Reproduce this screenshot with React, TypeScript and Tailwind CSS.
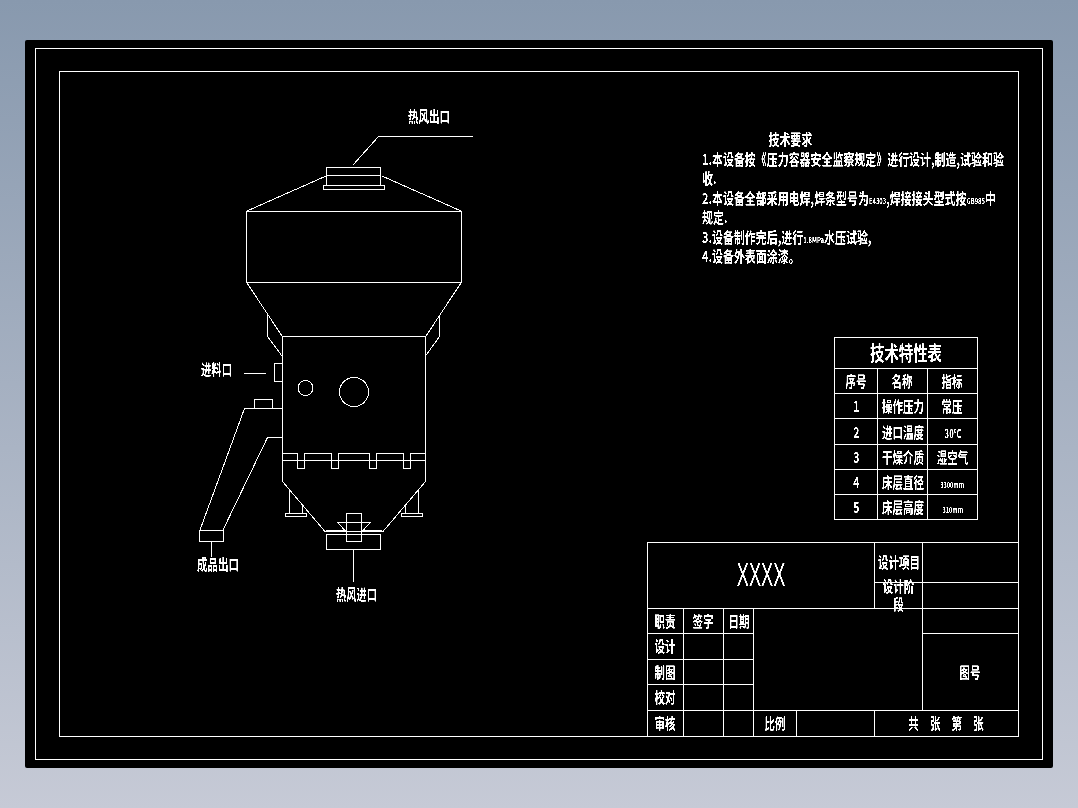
const cad = "inline-block whitespace-nowrap scale-x-[0.7] font-bold";
const line = "origin-left scale-x-[0.73] whitespace-nowrap";

function Cell({ className = "", children }: { className?: string; children?: React.ReactNode }) {
  return (
    <div className={`flex items-center justify-center border-white text-[15px] leading-none ${className}`}>
      <span className={cad}>{children}</span>
    </div>
  );
}

function Small({ children }: { children: React.ReactNode }) {
  return <span className="text-[8px] leading-none">{children}</span>;
}

function Label({ x, y, w, children }: { x: number; y: number; w: number; children: string }) {
  return (
    <text x={x} y={y} textLength={w} lengthAdjust="spacingAndGlyphs" fill="white" fontSize="15" fontWeight="700">
      {children}
    </text>
  );
}

function Dryer() {
  return (
    <svg
      viewBox="60 72 587 664"
      className="h-[664px] w-[587px] shrink-0"
      fill="none"
      stroke="white"
      strokeWidth="1"
      shapeRendering="crispEdges"
    >
      {/* top outlet */}
      <path d="M353 165L378.5 136.5H472.5" />
      <path d="M326.5 185.5V167.5H380.5V185.5M326.5 175.5H380.5" />
      <path d="M323.5 185.5H384.5V189.5H323.5Z" />
      <path d="M247 211L326 176M461 211L382 176" />
      {/* drum and hopper */}
      <path d="M246.5 211.5H461.5V282.5H246.5Z" />
      <path d="M247 283L282 336M461 283L426 336" />
      <path d="M267.5 314V336.5L282 356M439.5 316V336.5L425.5 356" />
      {/* body */}
      <path d="M282.5 336.5H425.5V481.5L383 531.5H325L282.5 481.5Z" />
      <path d="M274.5 363.5H282.5V381.5H274.5Z" />
      <path d="M244 373.5H266" />
      <circle cx="305.5" cy="388" r="7.5" />
      <circle cx="354" cy="392" r="14.5" />
      {/* discharge chute */}
      <path d="M254.5 408.5V399.5H272.5V408.5" />
      <path d="M282 408.5H244.5L200 530M282 437.5H267.5L223 530" />
      <path d="M199.5 530.5H223.5V541.5H199.5Z" />
      <path d="M211.5 542V557" />
      {/* band */}
      <path d="M283 453.5H297.5V468.5H304.5V453.5H331.5V468.5H338.5V453.5H369.5V468.5H376.5V453.5H403.5V468.5H410.5V453.5H425" />
      <path d="M283 460.5H425" />
      {/* legs */}
      <path d="M289.5 489V513M302.5 505V513M418.5 489V513M405.5 505V513" />
      <path d="M285.5 513.5H306.5V516.5H285.5ZM401.5 513.5H422.5V516.5H401.5Z" />
      {/* bottom inlet */}
      <path d="M326.5 534.5H380.5V549.5H326.5Z" />
      <path d="M346.5 541.5V513.5H361.5V541.5H346.5M346.5 534.5H361.5" />
      <path d="M346 531.5L337.5 522.5H370.5L362 531.5" />
      <path d="M326 530.5H346M362 530.5H382" />
      <path d="M353.5 550V582" />
      <g stroke="none">
        <Label x={408} y={122} w={42}>热风出口</Label>
        <Label x={201} y={375} w={31}>进料口</Label>
        <Label x={197} y={570} w={42}>成品出口</Label>
        <Label x={336} y={600} w={41}>热风进口</Label>
      </g>
    </svg>
  );
}

function Requirements() {
  return (
    <div className="pl-[55px] pt-[57px] text-[15px] font-bold leading-[19.5px] text-white">
      <div className={`${line} pl-[91px]`}>技术要求</div>
      <div className={line}>1.本设备按《压力容器安全监察规定》进行设计,制造,试验和验</div>
      <div className={line}>收.</div>
      <div className={line}>
        2.本设备全部采用电焊,焊条型号为<Small>E4303</Small>,焊接接头型式按<Small>GB985</Small>中
      </div>
      <div className={line}>规定.</div>
      <div className={line}>
        3.设备制作完后,进行<Small>1.8MPa</Small>水压试验,
      </div>
      <div className={line}>4.设备外表面涂漆。</div>
    </div>
  );
}

const specs = [
  ["1", "操作压力", "常压"],
  ["2", "进口温度", "30℃"],
  ["3", "干燥介质", "湿空气"],
  ["4", "床层直径", "3300mm"],
  ["5", "床层高度", "310mm"],
];

function SpecTable() {
  return (
    <div className="ml-[187px] mt-[71px] grid w-[144px] grid-cols-[43px_50px_50px] grid-rows-[31px_25px_25px_26px_25px_25px_25px] border-l border-t border-white">
      <div className="col-span-3 flex items-center justify-center border-b border-r border-white text-[20px] leading-none">
        <span className="inline-block scale-x-[0.72] whitespace-nowrap font-bold">技术特性表</span>
      </div>
      <Cell className="border-b border-r">序号</Cell>
      <Cell className="border-b border-r">名称</Cell>
      <Cell className="border-b border-r">指标</Cell>
      {specs.map(([no, name, value]) => (
        <div key={no} className="contents">
          <Cell className="border-b border-r">{no}</Cell>
          <Cell className="border-b border-r">{name}</Cell>
          <Cell className="border-b border-r">
            {value.endsWith("mm") ? <Small>{value}</Small> : value === "30℃" ? <span className="text-[11px]">{value}</span> : value}
          </Cell>
        </div>
      ))}
    </div>
  );
}

function TitleBlock() {
  return (
    <div className="mt-auto grid w-[371px] grid-cols-[36px_40px_30px_43px_78px_48px_95px] grid-rows-[40px_26px_25px_26px_25px_26px_25px] border-l border-t border-white [&>div]:pb-[2px]">
      <div className="col-span-5 row-span-2 flex items-center justify-center border-b border-r border-white font-['Liberation_Sans',sans-serif] text-[33px] leading-none">
        <span className="inline-block scale-x-[0.55]">XXXX</span>
      </div>
      <Cell className="border-b border-r">设计项目</Cell>
      <div className="border-b border-white" />
      <div className="relative border-b border-r border-white">
        <div className="absolute left-0 top-[-6px] w-full text-center text-[15px] font-bold leading-[18px]">
          <span className={cad}>设计阶</span>
          <br />
          <span className={cad}>段</span>
        </div>
      </div>
      <div className="border-b border-white" />

      <Cell className="border-b border-r">职责</Cell>
      <Cell className="border-b border-r">签字</Cell>
      <Cell className="border-b border-r">日期</Cell>
      <div className="col-span-3 row-span-4 border-b border-r border-white" />
      <div className="border-b border-white" />

      <Cell className="border-b border-r">设计</Cell>
      <div className="border-b border-r border-white" />
      <div className="border-b border-r border-white" />
      <Cell className="row-span-3 border-b">图号</Cell>

      <Cell className="border-b border-r">制图</Cell>
      <div className="border-b border-r border-white" />
      <div className="border-b border-r border-white" />

      <Cell className="border-b border-r">校对</Cell>
      <div className="border-b border-r border-white" />
      <div className="border-b border-r border-white" />

      <Cell className="border-r">审核</Cell>
      <div className="border-r border-white" />
      <div className="border-r border-white" />
      <Cell className="border-r">比例</Cell>
      <div className="border-r border-white" />
      <Cell className="col-span-2">
        <span className="inline-block pl-[16px] tracking-[16px]">共张第张</span>
      </Cell>
    </div>
  );
}

export default function App() {
  return (
    <div className="h-[808px] w-[1078px] overflow-hidden bg-linear-to-b from-[#8899ae] to-[#c6cad6] pl-[25px] pt-[40px]">
      <div className="h-[728px] w-[1028px] rounded-[2px] bg-black pl-[10px] pt-[8px] font-['Noto_Sans_CJK_SC',sans-serif] text-white contrast-[400%]">
        <div className="h-[712px] w-[1008px] border border-white pl-[23px] pt-[22px]">
          <div className="flex h-[666px] w-[960px] border border-white">
            <Dryer />
            <div className="flex w-[371px] flex-col">
              <Requirements />
              <SpecTable />
              <TitleBlock />
            </div>
          </div>
        </div>
      </div>
    </div>
  );
}
